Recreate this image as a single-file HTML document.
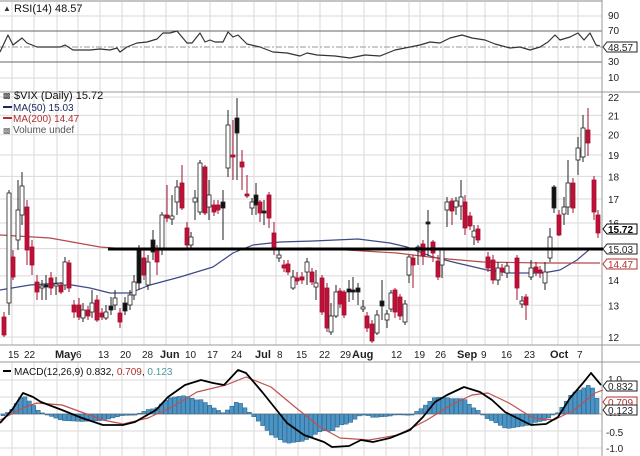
<!DOCTYPE html>
<html><head><meta charset="utf-8"><style>
html,body{margin:0;padding:0;background:#fff;width:640px;height:456px;overflow:hidden}
svg{display:block;font-family:"Liberation Sans","DejaVu Sans",sans-serif}
</style></head><body>
<svg id="s" width="640" height="456" viewBox="0 0 640 456" xmlns="http://www.w3.org/2000/svg"></svg>
<script>
(function(){
var o=[];
function ln(x1,y1,x2,y2,c,w,extra){o.push('<line x1="'+x1+'" y1="'+y1+'" x2="'+x2+'" y2="'+y2+'" stroke="'+c+'" stroke-width="'+(w||1)+'" '+(extra||'')+'/>');}
function tx(x,y,t,s,c,extra){o.push('<text x="'+x+'" y="'+y+'" font-size="'+s+'" fill="'+(c||'#000')+'" '+(extra||'')+'>'+t+'</text>');}
function pl(pts,c,w){o.push('<polyline fill="none" stroke="'+c+'" stroke-width="'+w+'" stroke-linejoin="round" points="'+pts.map(function(p){return p.join(',')}).join(' ')+'"/>');}
var G='#dadada';
var vx=[12,34,57,78,100,122,144,166,188,210,232,254,276,298,320,342,364,386,409,420,443,467,485,508,532,558,578];
vx.forEach(function(x){ln(x,2,x,92,G,1);ln(x,92,x,345,G,1);ln(x,362,x,456,G,1);});
[16,78].forEach(function(y){ln(0,y,602,y,G,1)});
ln(0,1,602,1,'#888',1);
ln(0,31,602,31,'#666',1);ln(0,62,602,62,'#666',1);
ln(0,47,602,47,'#999',1,'stroke-dasharray="6,2,2,2"');
ln(0,92,640,92,'#999',1);
function py(p){return 1321-396*Math.log(p);}
for(var p=12;p<=22;p++){ln(0,py(p),602,py(p),G,1);}
ln(0,345,640,345,'#999',1);
ln(0,362,640,362,'#999',1);
[380,397,431,448].forEach(function(y){ln(0,y,602,y,G,1)});
ln(602,0,602,456,'#999',1);
var rsi=[[0,52],[8,35],[13,45],[22,38],[27,43],[37,47],[60,47],[65,45],[73,50],[90,50],[100,49],[110,50],[117,48],[120,52],[127,47],[137,43],[147,42],[157,39],[163,33],[170,33],[177,31],[187,43],[192,43],[200,33],[205,42],[210,40],[215,42],[223,42],[228,32],[233,37],[238,35],[247,44],[260,47],[273,52],[287,53],[300,56],[307,53],[317,55],[335,56],[350,58],[365,55],[380,56],[395,50],[410,47],[420,45],[430,42],[440,43],[450,38],[462,35],[472,38],[485,40],[495,44],[510,48],[520,47],[530,50],[540,47],[548,42],[555,35],[560,40],[570,37],[578,33],[584,40],[590,33],[596,45],[600,46]];
pl(rsi,'#333',1.2);
pl([[0,290],[30,285],[60,283],[90,288],[110,293],[130,293],[150,285],[180,277],[213,267],[233,253],[253,245],[280,242],[313,241],[358,239],[390,243],[407,247],[433,257],[457,263],[487,270],[510,273],[543,273],[560,270],[577,260],[590,249]],'#3c4a86',1.2);
pl([[0,235],[50,238],[100,247],[140,250],[183,250],[310,248],[347,250],[397,253],[437,258],[483,262],[543,263],[600,263]],'#b24a4a',1.2);
var C=[[4,317,335,312,337,'r'],[9,193,303,190,315,'w'],[13,257,277,250,280,'r'],[18,210,240,180,250,'w'],[22,186,215,172,225,'w'],[27,207,250,200,265,'r'],[32,247,265,240,275,'r'],[37,282,292,275,300,'r'],[42,286,288,280,300,'w'],[46,285,287,275,300,'k'],[51,278,288,272,295,'r'],[56,284,286,277,295,'w'],[61,285,292,282,294,'r'],[65,262,285,257,290,'w'],[69,263,288,260,292,'r'],[74,305,312,300,318,'r'],[79,305,317,298,320,'r'],[83,310,318,303,322,'w'],[88,310,316,306,320,'r'],[92,303,312,290,318,'w'],[97,300,320,295,322,'r'],[102,313,317,308,320,'r'],[106,312,318,305,320,'w'],[111,306,310,297,315,'k'],[115,298,305,290,310,'w'],[120,313,322,308,328,'r'],[125,303,311,297,315,'k'],[130,295,305,290,310,'w'],[134,282,295,275,300,'w'],[139,250,283,245,290,'k'],[144,258,275,250,280,'r'],[148,262,285,255,290,'w'],[153,240,252,230,260,'k'],[157,250,262,245,275,'r'],[162,215,250,212,255,'w'],[167,215,218,185,222,'r'],[172,216,219,195,225,'w'],[177,187,202,180,215,'w'],[182,183,208,165,210,'r'],[187,228,245,222,250,'r'],[191,237,245,232,250,'w'],[195,198,202,190,220,'w'],[200,163,212,160,215,'w'],[205,167,213,165,215,'r'],[209,195,207,180,220,'w'],[214,205,212,200,216,'r'],[218,205,210,200,214,'r'],[223,202,208,190,240,'k'],[228,125,168,110,177,'w'],[233,155,157,120,180,'r'],[237,118,133,98,180,'k'],[242,162,167,150,190,'r'],[247,194,196,175,198,'r'],[252,202,208,198,215,'w'],[256,195,205,183,215,'k'],[260,202,213,200,222,'r'],[264,211,213,200,225,'k'],[269,195,218,192,228,'r'],[274,233,250,222,255,'r'],[279,255,258,250,262,'w'],[284,265,268,260,272,'r'],[288,264,272,260,275,'r'],[293,277,288,270,290,'w'],[297,278,281,272,285,'r'],[302,277,280,272,284,'r'],[307,262,272,258,285,'w'],[312,272,282,268,285,'r'],[316,283,287,270,300,'w'],[322,278,312,275,315,'r'],[327,288,328,283,332,'r'],[331,316,332,303,335,'w'],[336,292,316,285,318,'w'],[340,291,304,288,308,'r'],[344,292,315,290,318,'r'],[349,289,292,280,302,'k'],[353,290,292,277,300,'k'],[358,288,292,283,305,'k'],[363,307,309,300,312,'w'],[367,316,328,312,332,'r'],[372,324,341,320,343,'r'],[377,315,333,310,335,'w'],[382,301,306,280,320,'k'],[387,314,320,310,328,'w'],[391,293,309,290,312,'w'],[395,290,312,288,318,'r'],[400,297,316,294,320,'r'],[405,304,322,300,325,'w'],[409,257,275,255,283,'w'],[413,258,265,255,288,'r'],[418,247,250,245,265,'w'],[423,244,256,240,265,'r'],[428,222,224,210,256,'k'],[433,242,253,240,262,'r'],[438,261,277,255,280,'r'],[442,250,265,248,278,'w'],[447,202,210,197,227,'w'],[452,201,211,198,225,'r'],[456,201,207,197,215,'w'],[461,197,206,180,220,'w'],[465,202,228,195,235,'r'],[470,216,226,212,230,'r'],[474,231,237,225,245,'w'],[478,229,240,225,243,'r'],[488,257,268,252,272,'r'],[493,260,280,255,284,'r'],[498,268,280,262,285,'w'],[502,268,272,264,276,'r'],[507,266,273,262,278,'w'],[517,258,288,255,300,'r'],[522,301,304,296,308,'w'],[526,297,305,294,320,'r'],[531,268,277,260,280,'w'],[536,267,272,262,276,'r'],[540,270,273,266,278,'r'],[545,272,283,262,290,'w'],[550,237,258,228,262,'w'],[554,187,208,185,213,'k'],[559,215,235,210,236,'r'],[564,207,214,197,225,'w'],[568,183,207,160,215,'w'],[573,183,208,178,213,'r'],[578,148,160,137,175,'w'],[583,128,157,115,162,'w'],[588,130,143,108,156,'r'],[594,180,212,176,220,'r'],[598,215,233,210,238,'r']];
var fill={r:'#c0103a',w:'#ffffff',k:'#111'};
C.forEach(function(c){var x=c[0];ln(x,c[3],x,c[4],c[5]=='r'?'#a01030':'#222',1);
 var h=Math.max(2,c[2]-c[1]);
 o.push('<rect x="'+(x-2)+'" y="'+c[1]+'" width="4" height="'+h+'" fill="'+fill[c[5]]+'" stroke="'+(c[5]=='r'?'#a0102e':'#222')+'" stroke-width="0.8"/>');});
ln(108,249,603,249,'#000',3);
var M=[[0,423],[12,410],[23,393],[33,397],[41,402],[62,410],[82,418],[103,425],[123,425],[135,422],[156,410],[168,397],[185,385],[201,380],[213,383],[224,385],[238,370],[246,373],[263,393],[287,423],[304,435],[324,442],[332,447],[349,446],[361,440],[373,442],[390,438],[410,430],[423,417],[435,402],[447,395],[464,387],[480,392],[492,400],[505,412],[517,418],[531,425],[546,424],[558,417],[570,398],[583,383],[591,373],[601,385]];
var S=[[0,420],[25,407],[37,403],[62,405],[103,420],[123,424],[148,418],[172,407],[197,392],[226,385],[246,377],[271,387],[295,407],[320,427],[340,438],[369,440],[398,435],[427,420],[451,405],[472,395],[488,393],[509,403],[533,418],[554,420],[574,410],[595,393],[603,390]];
function interp(a,xx){for(var i=0;i<a.length-1;i++){if(xx>=a[i][0]&&xx<=a[i+1][0]){var t=(xx-a[i][0])/(a[i+1][0]-a[i][0]);return a[i][1]+t*(a[i+1][1]-a[i][1]);}}return a[a.length-1][1];}
for(var bx=3;bx<600;bx+=4.4){var d=(interp(S,bx)-interp(M,bx))*1.3;var y0=414;var by=d>0?y0-d:y0;var bh=Math.abs(d);if(bh<1)bh=1;
 o.push('<rect x="'+(bx-2).toFixed(1)+'" y="'+by.toFixed(1)+'" width="4" height="'+bh.toFixed(1)+'" fill="#4b95c6" stroke="#2a5f86" stroke-width="0.5"/>');}
ln(0,414,602,414,'#666',0.6);
pl(S,'#c05050',1.2);
pl(M,'#000',1.8);
tx(3,11,'&#9650;',8,'#333');tx(14,12,'RSI(14) 48.57',11,'#111');
tx(3,98,'&#9641;',8,'#333');tx(14,99,'$VIX (Daily) 15.72',11,'#111');
ln(3,107,12,107,'#1c2a60',2);tx(13,111,'MA(50) 15.03',10,'#1c2a60');
ln(3,118,12,118,'#b03030',2);tx(13,122,'MA(200) 14.47',10,'#b03030');
tx(3,133,'&#9641;',8,'#666');tx(13,133,'Volume undef',10,'#555');
ln(3,371,11,371,'#000',2);
o.push('<text x="14" y="375" font-size="10" fill="#111">MACD(12,26,9) 0.832, <tspan fill="#b03030">0.709</tspan>, <tspan fill="#4a9aa0">0.123</tspan></text>');
[['90',19],['70',34],['30',65]].forEach(function(a){tx(608,a[1],a[0],10,'#222')});
tx(608,81,'10',10,'#222');
function box(y,t,c,b){o.push('<path d="M603,'+y+' l4,-5 h30 v10 h-30 z" fill="#fff" stroke="'+c+'" stroke-width="1"/>');tx(608,y+4,t,10,c,b?'font-weight="bold"':'');}
box(47,'48.57','#222');
for(var q=12;q<=22;q++){if(q==15||q==14)continue;tx(608,py(q)+4,String(q),10,'#222');}
tx(608,py(14)+8,'14',10,'#222');
box(229,'15.72','#000',true);
box(249,'15.03','#222');
box(264,'14.47','#b03030');
tx(608,383,'1.0',10,'#222');tx(608,405,'0.5',10,'#222');tx(608,416,'0.0',10,'#222');tx(606,436,'-0.5',10,'#222');tx(606,452,'-1.0',10,'#222');
box(386,'0.832','#222');box(402,'0.709','#b03030');box(410,'0.123','#222');
var D=[[8,'15'],[24,'22'],[55,'May',1],[76,'6'],[98,'13'],[120,'20'],[142,'28'],[160,'Jun',1],[185,'10'],[207,'17'],[231,'24'],[255,'Jul',1],[277,'8'],[296,'15'],[319,'22'],[340,'29'],[352,'Aug',1],[391,'12'],[414,'19'],[435,'26'],[457,'Sep',1],[481,'9'],[501,'16'],[524,'23'],[550,'Oct',1],[577,'7']];
D.forEach(function(d){tx(d[0],358,d[1],d[2]?11:10,'#222',d[2]?'font-weight="bold"':'');});
document.getElementById('s').innerHTML=o.join('');
})();
</script>
</body></html>
